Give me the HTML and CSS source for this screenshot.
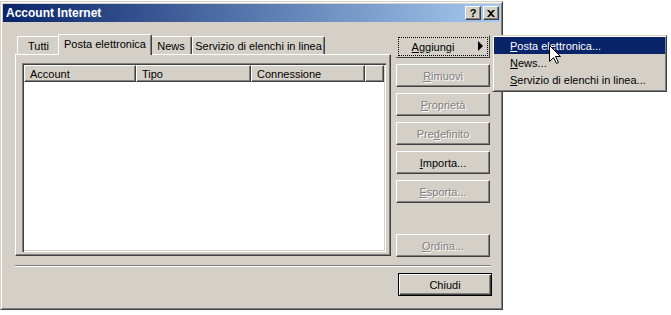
FILE: index.html
```html
<!DOCTYPE html>
<html lang="it">
<head>
    <meta charset="UTF-8">
    <title>Account Internet</title>
    <link rel="stylesheet" href="styles.css">
</head>
<body>
    <div class="window">
        <div class="titlebar">
            <span class="title">Account Internet</span>
            <div class="title-buttons">
                <span class="tbtn help">?</span>
                <span class="tbtn">
                    <svg width="8" height="7" viewBox="0 0 8 7"><path d="M0 0h2l2 2 2-2h2L5 3.5 8 7H6L4 5 2 7H0l3-3.5z" fill="#000"/></svg>
                </span>
            </div>
        </div>

        <div class="content">
            <div class="main">
                <div class="tabs-col">
                    <div class="tabs">
                        <div class="tab tab-all">Tutti</div>
                        <div class="tab tab-mail active">Posta elettronica</div>
                        <div class="tab tab-news">News</div>
                        <div class="tab tab-dir">Servizio di elenchi in linea</div>
                    </div>
                    <div class="panel">
                        <div class="listview">
                            <div class="lv-header">
                                <div class="col col-account">Account</div>
                                <div class="col col-type">Tipo</div>
                                <div class="col col-conn">Connessione</div>
                                <div class="col col-rest"></div>
                            </div>
                        </div>
                    </div>
                </div>

                <div class="side">
                    <div class="btn btn-add"><span><u>A</u>ggiungi</span><span class="arrow"></span></div>
                    <div class="btn disabled"><span><u>R</u>imuovi</span></div>
                    <div class="btn disabled"><span><u>P</u>roprietà</span></div>
                    <div class="btn disabled"><span>Pre<u>d</u>efinito</span></div>
                    <div class="btn"><span><u>I</u>mporta...</span></div>
                    <div class="btn disabled"><span><u>E</u>sporta...</span></div>
                    <div class="btn disabled btn-sort"><span><u>O</u>rdina...</span></div>
                </div>
            </div>

            <div class="separator"></div>

            <div class="footer">
                <div class="btn default"><span>Chiudi</span></div>
            </div>
        </div>
    </div>

    <!-- sottomenu di Aggiungi -->
    <div class="menu">
        <div class="menu-item selected"><u>P</u>osta elettronica...</div>
        <div class="menu-item"><u>N</u>ews...</div>
        <div class="menu-item"><u>S</u>ervizio di elenchi in linea...</div>
    </div>

    <svg class="cursor" width="13" height="20" viewBox="0 0 13 20">
        <path d="M0.5 0.5V16.5L4.5 12.5L7.5 18.5L9.5 17.5L6.5 11.5H11.5Z" fill="#fff" stroke="#000" stroke-width="1"/>
    </svg>
</body>
</html>
```

FILE: styles.css
```css
body {
    margin: 0;
    background-color: #fff;
    font-family: "Liberation Sans", Arial, sans-serif;
    font-size: 11px;
    color: #000;
}

.window {
    box-sizing: border-box;
    width: 503px;
    height: 309px;
    margin-top: 1px;
    padding: 2px;
    background-color: #d4d0c8;
    border: 1px solid;
    border-color: #d4d0c8 #404040 #404040 #d4d0c8;
    box-shadow: inset 1px 1px #fff, inset -1px -1px #808080;
}

.titlebar {
    height: 18px;
    display: flex;
    align-items: center;
    justify-content: space-between;
    background: linear-gradient(to right, #0a246a, #a6caf0);
}

.title {
    padding-left: 3px;
    color: #fff;
    font-weight: bold;
    font-size: 12px;
}

.title-buttons {
    display: flex;
    gap: 2px;
    margin-right: 1px;
}

.tbtn {
    box-sizing: border-box;
    width: 16px;
    height: 14px;
    display: flex;
    align-items: center;
    justify-content: center;
    background-color: #d4d0c8;
    border: 1px solid;
    border-color: #fff #404040 #404040 #fff;
    box-shadow: inset -1px -1px #808080;
}

.help {
    font-weight: bold;
    font-size: 11px;
    line-height: 12px;
}

.content {
    padding: 12px 8px 0 12px;
}

.main {
    display: flex;
    gap: 5px;
}

.tabs-col {
    width: 376px;
}

.tabs {
    display: flex;
    height: 20px;
    padding-left: 2px;
}

.tab {
    box-sizing: border-box;
    height: 18px;
    margin-top: 2px;
    padding-top: 1px;
    line-height: 16px;
    text-align: center;
    border-top: 1px solid #fff;
    border-left: 1px solid #fff;
    border-right: 1px solid #404040;
    border-radius: 2px 2px 0 0;
    box-shadow: inset -1px 0 #808080;
}

.tab-all { width: 43px; }
.tab-news { width: 42px; }
.tab-dir { width: 133px; }

.tab.active {
    position: relative;
    z-index: 1;
    width: 94px;
    height: 21px;
    margin: 0 -2px;
    line-height: 17px;
    background-color: #d4d0c8;
}

.panel {
    box-sizing: border-box;
    height: 202px;
    padding: 8px 4px 3px 6px;
    border: 1px solid;
    border-color: #fff #404040 #404040 #fff;
    box-shadow: inset -1px -1px #808080;
}

.listview {
    box-sizing: border-box;
    height: 100%;
    padding: 2px;
    background-color: #fff;
    box-shadow: inset 1px 1px #808080, inset 2px 2px #404040, inset -1px -1px #fff, inset -2px -2px #d4d0c8;
}

.lv-header {
    display: flex;
    height: 17px;
}

.col {
    box-sizing: border-box;
    padding: 1px 0 0 5px;
    line-height: 15px;
    background-color: #d4d0c8;
    border: 1px solid;
    border-color: #fff #404040 #404040 #fff;
    box-shadow: inset -1px -1px #808080;
}

.col-account { width: 112px; }
.col-type { width: 115px; }
.col-conn { width: 114px; }
.col-rest { flex: 1; }

.side {
    display: flex;
    flex-direction: column;
    gap: 6px;
    width: 94px;
    padding-top: 1px;
}

.btn {
    box-sizing: border-box;
    position: relative;
    width: 94px;
    height: 23px;
    padding-top: 1px;
    display: flex;
    align-items: center;
    justify-content: center;
    background-color: #d4d0c8;
    border: 1px solid;
    border-color: #fff #404040 #404040 #fff;
    box-shadow: inset -1px -1px #808080, inset 1px 1px #d4d0c8;
}

.btn.disabled {
    color: #808080;
    text-shadow: 1px 1px #fff;
}

.btn-add {
    padding-right: 20px;
    border-color: #d4d0c8 #404040 #404040 #d4d0c8;
    box-shadow: none;
}

.btn-add::after {
    content: "";
    position: absolute;
    inset: 1px;
    border: 1px dotted #000;
}

.arrow {
    position: absolute;
    right: 6px;
    top: 5px;
    width: 0;
    height: 0;
    border-top: 5px solid transparent;
    border-bottom: 5px solid transparent;
    border-left: 5px solid #000;
}

.btn-sort {
    margin-top: 25px;
}

.separator {
    height: 0;
    margin: 8px 1px 0 0;
    border-top: 1px solid #808080;
    border-bottom: 1px solid #fff;
}

.footer {
    display: flex;
    justify-content: flex-end;
    padding-top: 6px;
}

.btn.default {
    border: 1px solid #000;
    box-shadow: inset 1px 1px #fff, inset -1px -1px #404040, inset -2px -2px #808080;
}

.menu {
    position: absolute;
    left: 492px;
    top: 35px;
    box-sizing: border-box;
    width: 175px;
    height: 57px;
    padding: 1px;
    background-color: #d4d0c8;
    border: 1px solid;
    border-color: #d4d0c8 #404040 #404040 #d4d0c8;
    box-shadow: inset 1px 1px #fff, inset -1px -1px #808080;
}

.menu-item {
    height: 17px;
    padding: 1px 0 0 16px;
    box-sizing: border-box;
    line-height: 16px;
}

.menu-item.selected {
    background-color: #0a246a;
    color: #fff;
}

.cursor {
    position: absolute;
    left: 549px;
    top: 45px;
}
```
